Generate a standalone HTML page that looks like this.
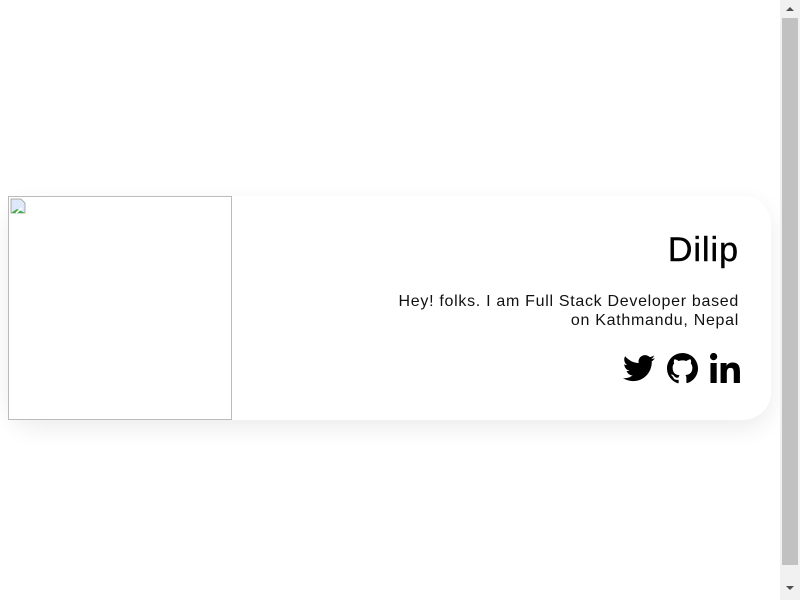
<!DOCTYPE html>
<html><head><style>
html,body{margin:0;padding:0;width:800px;height:600px;overflow:hidden;background:#fff;font-family:"Liberation Sans",sans-serif;}
.card{position:absolute;left:8px;top:196px;width:763px;height:224px;border-radius:28px;background:#fff;box-shadow:0 8px 24px rgba(0,0,0,0.08);}
.img{position:absolute;left:8px;top:196px;width:222px;height:222px;border:1px solid #bbb;background:#fff;}
.ic{position:absolute;left:10px;top:198px;width:16px;height:16px;}
.name{position:absolute;right:61px;top:231px;font-size:34px;font-weight:500;color:#000;letter-spacing:1px;-webkit-text-stroke:0.4px #000;}
.desc{position:absolute;right:61px;top:292px;width:380px;text-align:right;font-size:16px;line-height:19px;color:#111;letter-spacing:0.7px;}
.icons{position:absolute;right:60px;top:352px;height:32px;display:flex;gap:12px;align-items:center;}
.sb{position:absolute;right:0;top:0;width:20px;height:600px;background:#f1f1f1;}
.thumb{position:absolute;left:2px;top:18px;width:16px;height:547px;background:#c1c1c1;}
</style></head><body>
<div class="card"></div>
<div class="img"></div>
<svg class="ic" viewBox="0 0 16 16"><path d="M1 1h10l4 4v10H1z" fill="#dde8f8" stroke="#999" stroke-width="0.8"/><path d="M1 15l6-4 8 4z" fill="#4a4"/><path d="M6 15l6-5" stroke="#fff" stroke-width="1.5"/></svg>
<div class="name">Dilip</div>
<div class="desc">Hey! folks. I am Full Stack Developer based<br>on Kathmandu, Nepal</div>
<div class="icons">
<svg width="32" height="28" viewBox="0 0 512 416"><path d="M459 104c1 5 1 9 1 14 0 139-106 299-299 299-59 0-115-17-161-47 8 1 16 1 25 1 49 0 94-17 130-45-46-1-85-31-98-73 6 1 13 2 20 2 9 0 19-1 27-4-48-10-84-52-84-103v-1c14 8 30 13 47 13-28-19-47-51-47-87 0-20 5-38 15-53 52 64 129 105 216 110-2-8-3-16-3-24 0-58 47-105 105-105 30 0 57 13 77 33 24-5 46-13 67-26-8 24-25 45-46 58 21-2 42-8 60-16-14 21-32 39-52 54z" fill="#000"/></svg>
<svg width="31" height="31" viewBox="0 0 16 16"><path d="M8 0C3.6 0 0 3.6 0 8c0 3.5 2.3 6.5 5.5 7.6.4.1.5-.2.5-.4v-1.4c-2.2.5-2.7-1-2.7-1-.4-.9-.9-1.2-.9-1.2-.7-.5.1-.5.1-.5.8.1 1.2.8 1.2.8.7 1.2 1.9.9 2.3.7.1-.5.3-.9.5-1.1-1.8-.2-3.6-.9-3.6-4 0-.9.3-1.6.8-2.1-.1-.2-.4-1 .1-2.1 0 0 .7-.2 2.2.8.6-.2 1.3-.3 2-.3s1.4.1 2 .3c1.5-1 2.2-.8 2.2-.8.4 1.1.2 1.9.1 2.1.5.6.8 1.3.8 2.1 0 3.1-1.9 3.7-3.6 3.9.3.3.5.8.5 1.5v2.2c0 .2.1.5.6.4C13.7 14.5 16 11.5 16 8c0-4.4-3.6-8-8-8z" fill="#000"/></svg>
<svg width="30" height="30" viewBox="0 0 448 448"><path d="M100 448H7V149h93zM54 108C24 108 0 83 0 53a54 54 0 01108 0c0 30-24 55-54 55zM448 448h-93V302c0-35-1-79-48-79-48 0-56 37-56 77v148h-93V149h89v41h1c13-24 43-48 88-48 94 0 111 62 111 142v164z" fill="#000"/></svg>
</div>
<div class="sb"><div class="thumb"></div>
<svg style="position:absolute;left:5px;top:5px" width="10" height="8"><path d="M1 6l4-4 4 4z" fill="#505050"/></svg>
<svg style="position:absolute;left:5px;top:584px" width="10" height="8"><path d="M1 2l4 4 4-4z" fill="#505050"/></svg>
</div>
</body></html>
